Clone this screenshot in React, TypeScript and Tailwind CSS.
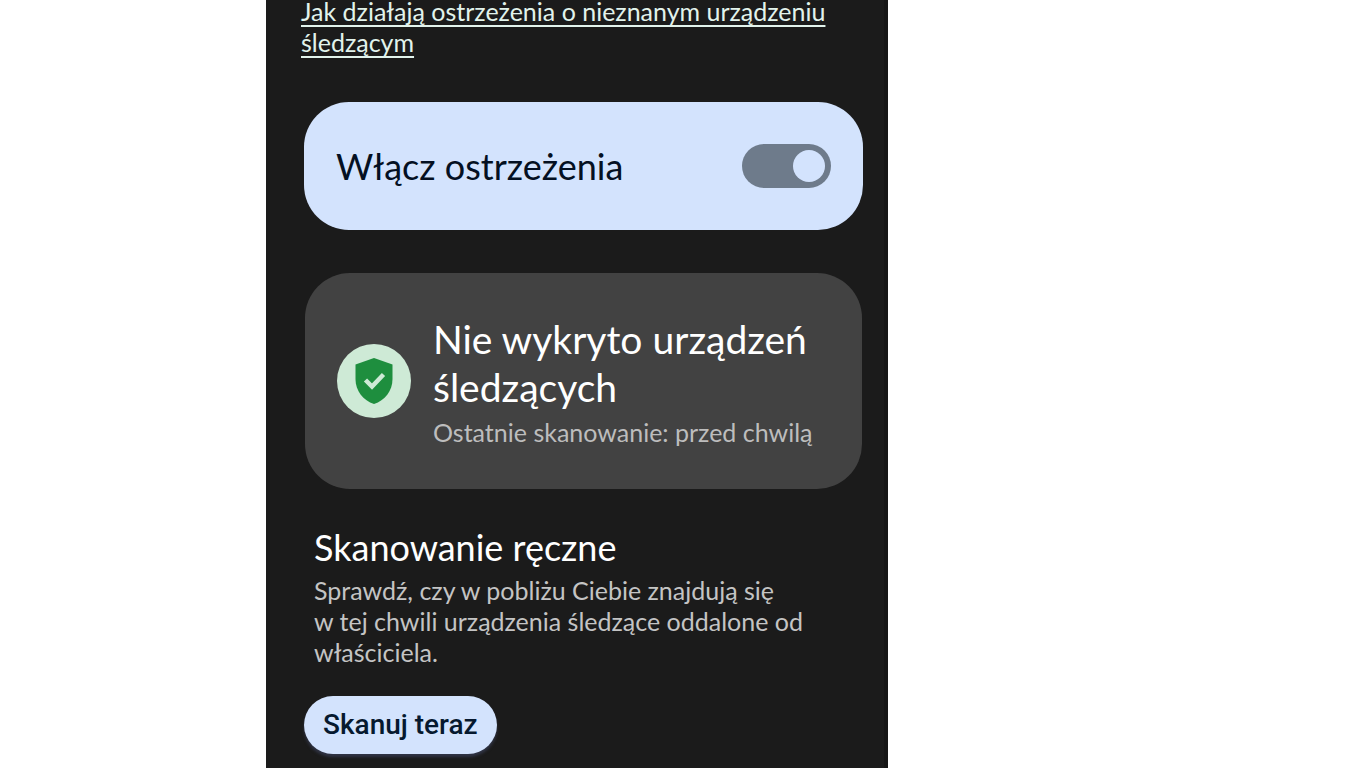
import { useState } from "react";

function ShieldBadge() {
  return (
    <svg className="size-[74px] shrink-0" viewBox="0 0 74 74" aria-hidden="true">
      <circle cx="37" cy="37" r="37" fill="#ceead6" />
      <path
        d="M37 14 18.500 20.500V35c0 12 7.800 21.500 18.500 25 10.700-3.500 18.500-13 18.500-25V20.500Z"
        fill="#1e8e3e"
      />
      <path d="m28.500 36 6.500 6.500 11.500-12" fill="none" stroke="#ceead6" strokeWidth="4.500" />
    </svg>
  );
}

export default function App() {
  const [alertsOn, setAlertsOn] = useState(true);

  return (
    <div className="min-h-screen bg-white font-['Lato','Noto_Sans',sans-serif]">
      <main className="ml-[266px] flow-root min-h-screen max-w-[622px] border-r-4 border-[#161616] bg-[#1b1b1b] pr-[21px] pl-[38px]">
        <p className="-mt-1 -ml-[3px] text-[25px] leading-[31px] text-[#e2f3ec]">
          <a href="#ostrzezenia" className="underline decoration-2 underline-offset-4 [text-decoration-skip-ink:none]">
            Jak działają ostrzeżenia o nieznanym urządzeniu śledzącym
          </a>
        </p>

        <label className="mt-11 flex h-32 items-center justify-between rounded-[45px] bg-[#d3e3fd] px-8 text-[36px] leading-[48px] text-[#041022]">
          Włącz ostrzeżenia
          <input
            type="checkbox"
            role="switch"
            checked={alertsOn}
            onChange={(e) => setAlertsOn(e.target.checked)}
            className="flex h-11 w-[89px] shrink-0 appearance-none items-center rounded-full bg-[#6e7b8b] px-1.5 before:size-8 before:rounded-full before:bg-[#d3e3fd] checked:justify-end"
          />
        </label>

        <section className="mx-px mt-[43px] flex h-[216px] items-center gap-[22px] rounded-[45px] bg-[#424242] px-8">
          <ShieldBadge />
          <div>
            <h2 className="text-[39px] leading-[48px] text-white">Nie wykryto urządzeń śledzących</h2>
            <p className="mt-1.5 text-[25px] leading-[31px] text-[#bdbdbd]">Ostatnie skanowanie: przed chwilą</p>
          </div>
        </section>

        <section className="mt-[34px] pr-6 pl-2.5">
          <h2 className="text-[36px] leading-[48px] text-white">Skanowanie ręczne</h2>
          <p className="mt-1 text-[25px] leading-[31px] text-[#c4c4c4]">
            Sprawdź, czy w pobliżu Ciebie znajdują się w&nbsp;tej&nbsp;chwili urządzenia śledzące oddalone od
            właściciela.
          </p>
        </section>

        <button
          type="button"
          className="mt-7 h-[58px] rounded-full bg-[#d3e3fd] px-[19px] font-['Roboto',sans-serif] text-[28px] leading-8 font-medium text-[#06192f] shadow-[0_3px_3px_#303445]"
        >
          Skanuj teraz
        </button>
      </main>
    </div>
  );
}
